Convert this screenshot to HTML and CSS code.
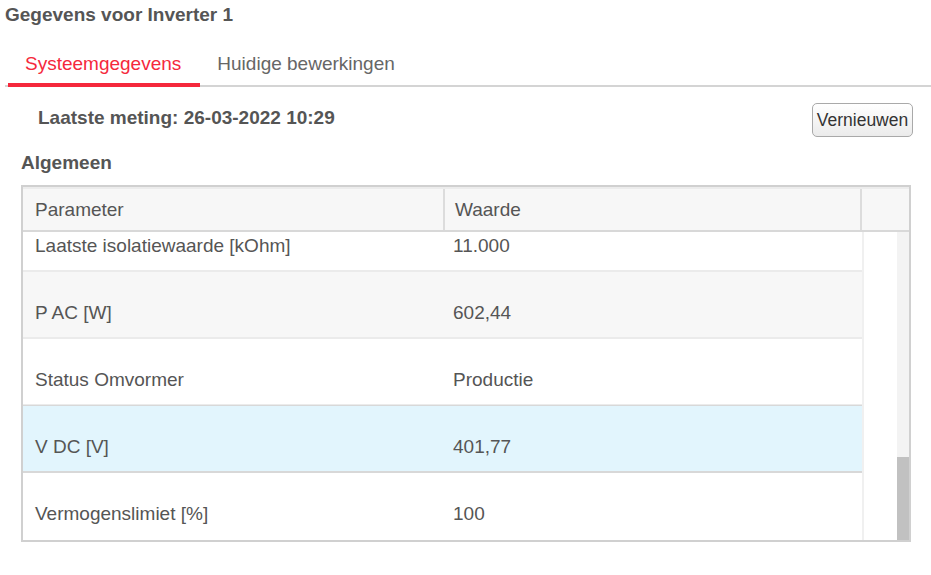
FILE: index.html
```html
<!DOCTYPE html>
<html>
<head>
<meta charset="utf-8">
<link rel="stylesheet" href="styles.css">
</head>
<body>
<div class="page">
  <div class="title">Gegevens voor Inverter 1</div>
  <div class="tabs">
    <div class="tab active">Systeemgegevens</div>
    <div class="tab">Huidige bewerkingen</div>
  </div>
  <div class="meta">
    <span class="meting">Laatste meting: 26-03-2022 10:29</span>
    <button class="btn">Vernieuwen</button>
  </div>
  <div class="section">Algemeen</div>
  <div class="grid">
    <div class="grid-head">
      <div class="hc c1">Parameter</div>
      <div class="hc c2">Waarde</div>
      <div class="hc c3"></div>
    </div>
    <div class="grid-body">
      <div class="rows-view">
        <div class="rows">
          <div class="row"><div class="cell c1">Laatste isolatiewaarde [kOhm]</div><div class="cell c2">11.000</div></div>
          <div class="row alt"><div class="cell c1">P AC [W]</div><div class="cell c2">602,44</div></div>
          <div class="row"><div class="cell c1">Status Omvormer</div><div class="cell c2">Productie</div></div>
          <div class="row sel"><div class="cell c1">V DC [V]</div><div class="cell c2">401,77</div></div>
          <div class="row last"><div class="cell c1">Vermogenslimiet [%]</div><div class="cell c2">100</div></div>
        </div>
      </div>
      <div class="vscroll"><div class="track"><div class="thumb"></div></div></div>
    </div>
  </div>
</div>
</body>
</html>
```

FILE: styles.css
```css
html, body {
  margin: 0;
  padding: 0;
  background: #ffffff;
}
body {
  font-family: "Liberation Sans", Arial, sans-serif;
  color: #555555;
}
.page {
  padding: 4px 0 0 5px;
  width: 926px;
}
.title {
  font-size: 19px;
  font-weight: bold;
  line-height: 22px;
  color: #555555;
}
.tabs {
  display: flex;
  margin-top: 19px;
  border-bottom: 2px solid #d4d4d4;
  padding-left: 3px;
}
.tab {
  font-size: 19px;
  line-height: 22px;
  padding: 8px 19px 8px 17px;
  color: #666666;
  margin-bottom: -2px;
  border-bottom: 4px solid transparent;
}
.tab.active {
  color: #f5283c;
  border-bottom-color: #f5283c;
}
.meta {
  display: flex;
  justify-content: space-between;
  align-items: flex-start;
  padding: 16px 18px 0 33px;
}
.meting {
  font-size: 19px;
  font-weight: bold;
  line-height: 22px;
  margin-top: 4px;
  color: #555555;
}
.btn {
  width: 101px;
  height: 34px;
  font-family: "Liberation Sans", Arial, sans-serif;
  font-size: 17.5px;
  color: #333333;
  border: 1px solid #a9a9a9;
  border-radius: 5px;
  background: linear-gradient(#ffffff, #ebebeb);
  padding: 0;
}
.section {
  font-size: 19px;
  font-weight: bold;
  line-height: 22px;
  padding-left: 16px;
  margin-top: 15px;
  color: #555555;
}
.grid {
  margin: 11px 0 0 16px;
  width: 886px;
  border: 2px solid #d0d0d0;
  background: #fff;
}
.grid-head {
  display: flex;
  border-top: 2px solid #ececec;
  border-bottom: 2px solid #d8d8d8;
  background: #f7f7f7;
  height: 41px;
}
.hc {
  font-size: 19px;
  line-height: 41px;
  color: #555555;
}
.hc.c1 {
  width: 408px;
  padding-left: 12px;
  border-right: 2px solid #dcdcdc;
}
.hc.c2 {
  width: 405px;
  padding-left: 10px;
  border-right: 2px solid #dcdcdc;
}
.hc.c3 {
  flex: 1;
}
.grid-body {
  display: flex;
  height: 308px;
}
.rows-view {
  width: 839px;
  overflow: hidden;
  border-right: 2px solid #f0f0f0;
}
.rows {
  margin-top: -27px;
}
.row {
  display: flex;
  height: 65px;
  border-bottom: 2px solid #ebebeb;
  background: #ffffff;
}
.row.alt {
  background: #f7f7f7;
}
.row.sel {
  background: #e2f5fd;
  border-top: 1px solid #d8d8d8;
  margin-top: -1px;
  border-bottom-color: #d8d8d8;
}
.row.last {
  border-bottom: none;
}
.cell {
  font-size: 19px;
  line-height: 22px;
  padding-top: 30px;
  color: #555555;
}
.cell.c1 {
  width: 408px;
  padding-left: 12px;
}
.cell.c2 {
  padding-left: 10px;
}
.vscroll {
  flex: 1;
  display: flex;
  justify-content: flex-end;
}
.track {
  width: 12px;
  background: #f3f3f3;
  display: flex;
  flex-direction: column;
  justify-content: flex-end;
}
.thumb {
  height: 83px;
  background: #c1c1c1;
}
```
